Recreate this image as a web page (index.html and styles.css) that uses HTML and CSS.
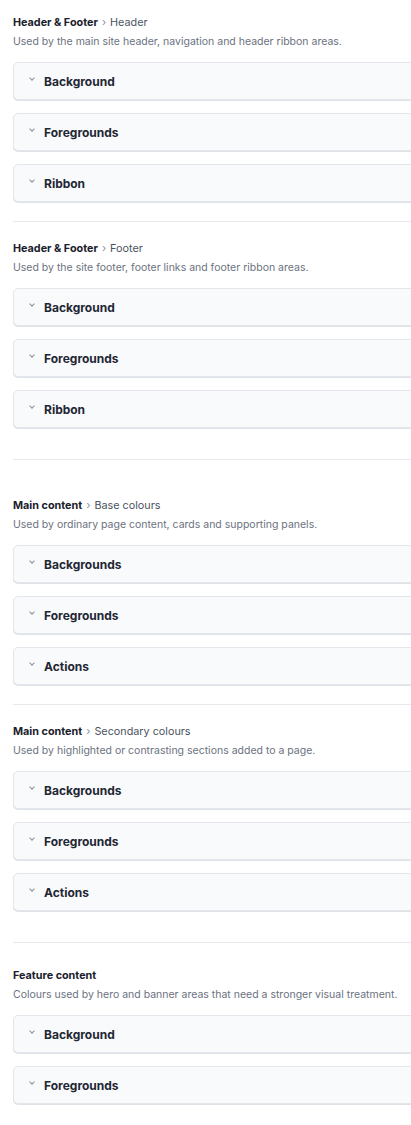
FILE: index.html
```html
<!DOCTYPE html>
<html lang="en">
<head>
    <meta charset="UTF-8">
    <meta name="viewport" content="width=device-width, initial-scale=1.0">
    <title>Theme colours</title>
    <link rel="stylesheet" href="styles.css">
</head>
<body>
    <div class="page">
        <div class="group">
            <div class="section">
                <div class="section-title"><strong>Header &amp; Footer</strong> <span class="sep">›</span> Header</div>
                <div class="section-desc">Used by the main site header, navigation and header ribbon areas.</div>
                <div class="panel"><span class="chev"></span>Background</div>
                <div class="panel"><span class="chev"></span>Foregrounds</div>
                <div class="panel"><span class="chev"></span>Ribbon</div>
            </div>
            <div class="section">
                <div class="section-title"><strong>Header &amp; Footer</strong> <span class="sep">›</span> Footer</div>
                <div class="section-desc">Used by the site footer, footer links and footer ribbon areas.</div>
                <div class="panel"><span class="chev"></span>Background</div>
                <div class="panel"><span class="chev"></span>Foregrounds</div>
                <div class="panel"><span class="chev"></span>Ribbon</div>
            </div>
        </div>

        <div class="group group-main">
            <div class="section">
                <div class="section-title"><strong>Main content</strong> <span class="sep">›</span> Base colours</div>
                <div class="section-desc">Used by ordinary page content, cards and supporting panels.</div>
                <div class="panel"><span class="chev"></span>Backgrounds</div>
                <div class="panel"><span class="chev"></span>Foregrounds</div>
                <div class="panel"><span class="chev"></span>Actions</div>
            </div>
            <div class="section">
                <div class="section-title"><strong>Main content</strong> <span class="sep">›</span> Secondary colours</div>
                <div class="section-desc">Used by highlighted or contrasting sections added to a page.</div>
                <div class="panel"><span class="chev"></span>Backgrounds</div>
                <div class="panel"><span class="chev"></span>Foregrounds</div>
                <div class="panel"><span class="chev"></span>Actions</div>
            </div>
        </div>

        <div class="group group-feature">
            <div class="section">
                <div class="section-title"><strong>Feature content</strong></div>
                <div class="section-desc">Colours used by hero and banner areas that need a stronger visual treatment.</div>
                <div class="panel"><span class="chev"></span>Background</div>
                <div class="panel"><span class="chev"></span>Foregrounds</div>
            </div>
        </div>
    </div>
</body>
</html>
```

FILE: styles.css
```css
body {
    margin: 0;
    padding: 0;
    background: #fff;
    font-family: Inter, "Noto Sans", sans-serif;
    color: #1f2733;
    overflow: hidden;
}

.page {
    width: 440px;
    padding: 15px 0 0 13px;
}

.group {
    padding-bottom: 31px;
}

.group + .group {
    border-top: 1px solid #e8eaee;
}

.group-main {
    padding-top: 38px;
}

.group-feature {
    padding-top: 25px;
}

.section + .section {
    border-top: 1px solid #e8eaee;
    margin-top: 19px;
    padding-top: 19px;
}

.section-title {
    font-size: 10.8px;
    line-height: 15px;
    color: #4b5360;
}

.section-title strong {
    font-weight: 700;
    color: #1a212c;
}

.sep {
    color: #8a919c;
    margin: 0 1px;
}

.section-desc {
    font-size: 10.5px;
    line-height: 15px;
    margin-top: 4px;
    margin-bottom: 13px;
    color: #6b7280;
}

.panel {
    display: flex;
    align-items: center;
    height: 36px;
    margin-bottom: 13px;
    padding-left: 16px;
    border: 1px solid #e3e6eb;
    border-radius: 5px;
    background: #f9fafc;
    box-shadow: 0 1px 0 #dfe2e7;
    font-size: 12px;
    font-weight: 700;
    color: #1f2733;
}

.panel:last-child {
    margin-bottom: 0;
}

.chev {
    width: 3px;
    height: 3px;
    border-right: 1px solid #8a919c;
    border-bottom: 1px solid #8a919c;
    transform: rotate(45deg);
    margin: -6px 10px 0 0;
}
```
